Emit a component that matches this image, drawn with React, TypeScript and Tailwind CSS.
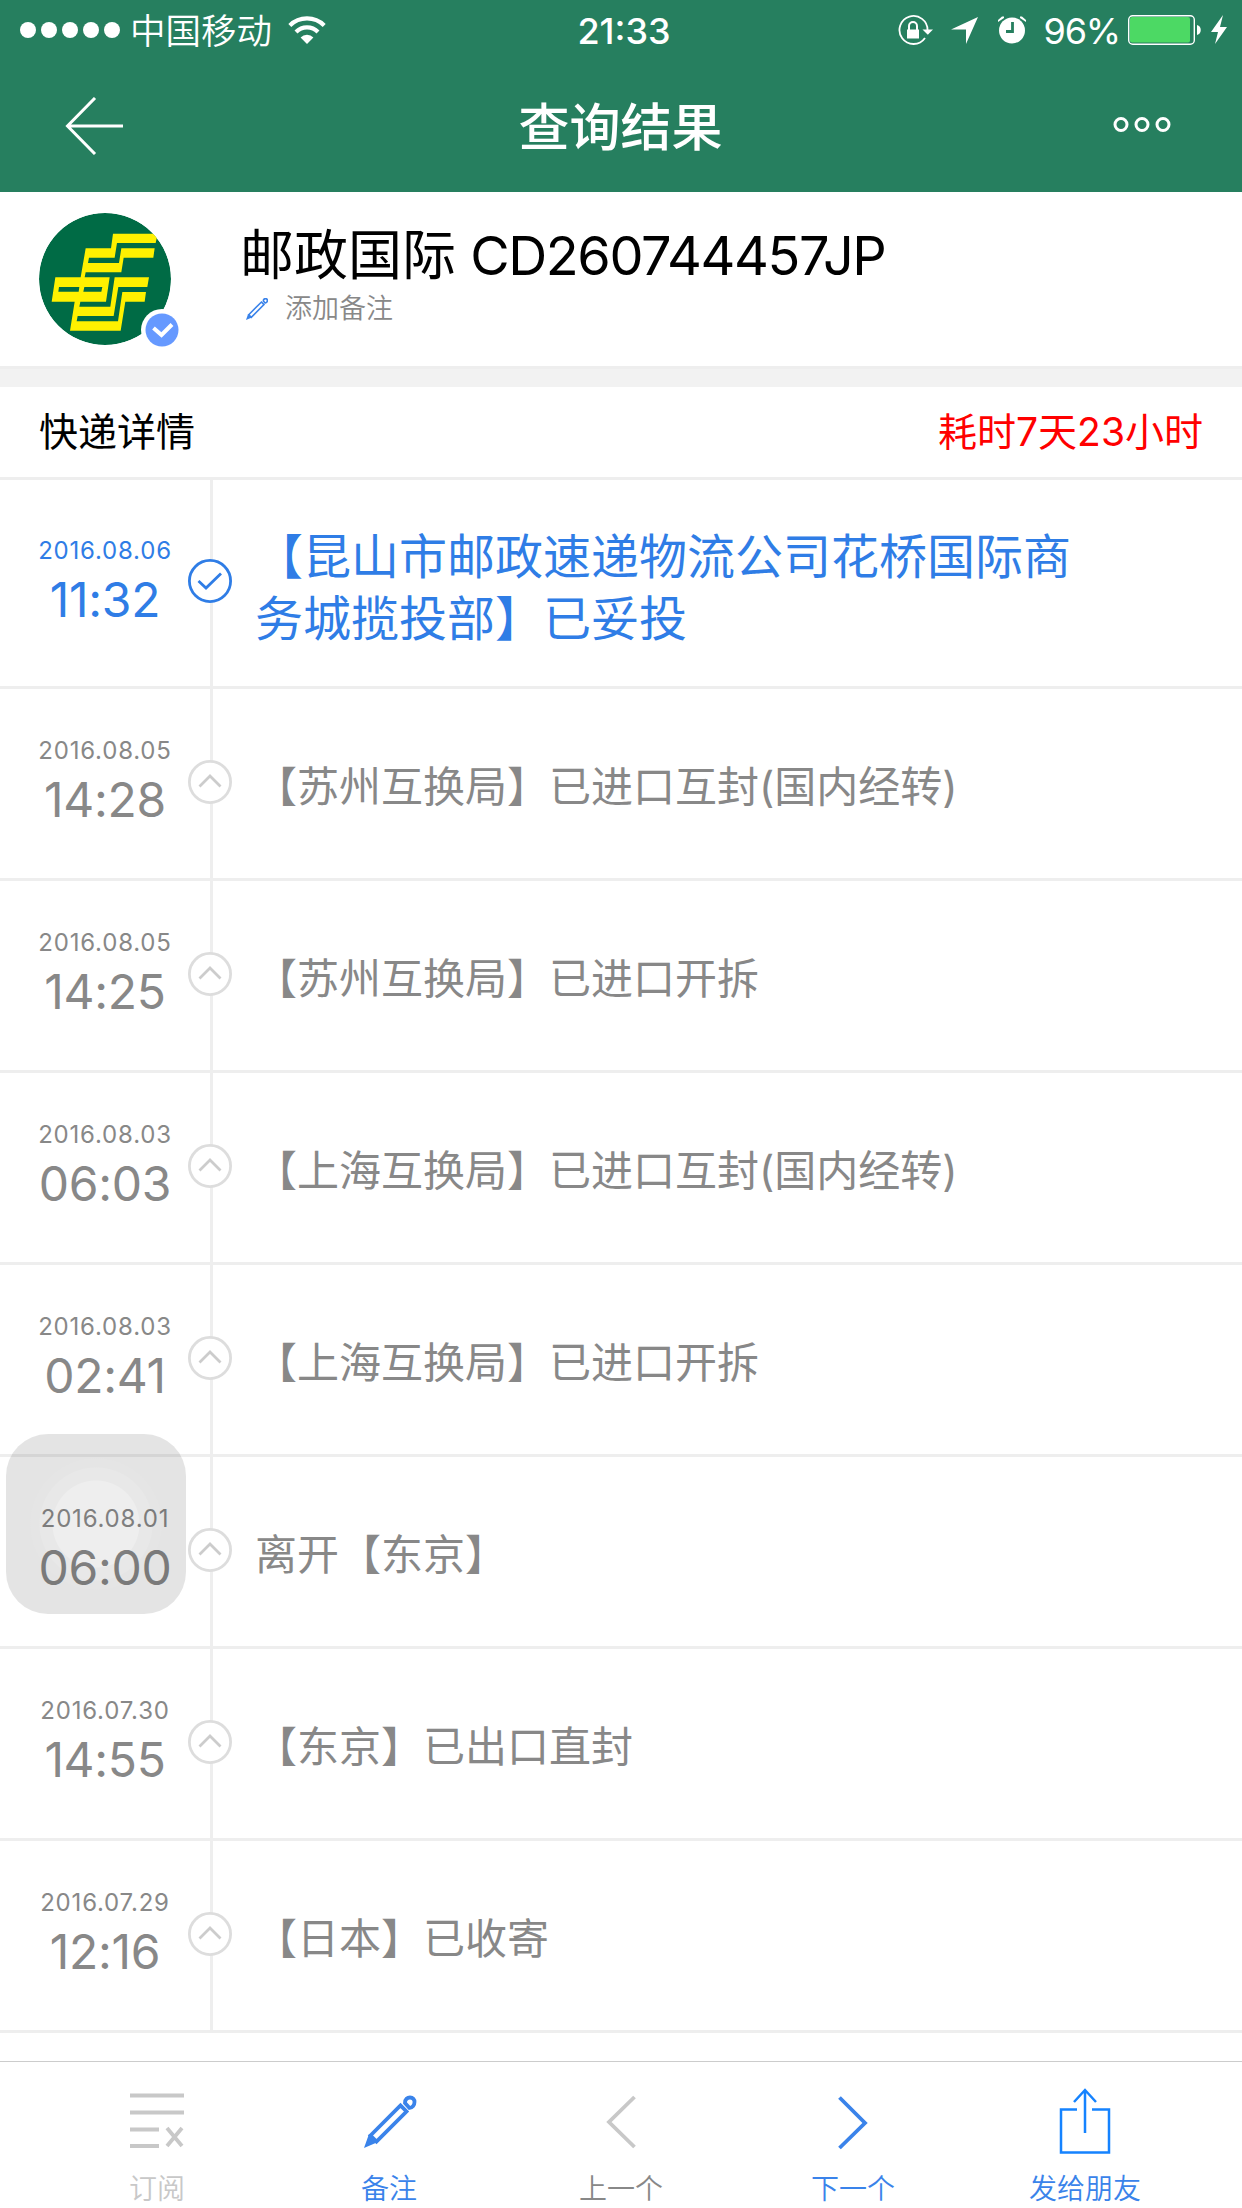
import type { ReactNode } from "react";

interface TrackEvent {
  date: string;
  time: string;
  text: string;
}

const events: TrackEvent[] = [
  { date: "2016.08.06", time: "11:32", text: "【昆山市邮政速递物流公司花桥国际商务城揽投部】已妥投" },
  { date: "2016.08.05", time: "14:28", text: "【苏州互换局】已进口互封(国内经转)" },
  { date: "2016.08.05", time: "14:25", text: "【苏州互换局】已进口开拆" },
  { date: "2016.08.03", time: "06:03", text: "【上海互换局】已进口互封(国内经转)" },
  { date: "2016.08.03", time: "02:41", text: "【上海互换局】已进口开拆" },
  { date: "2016.08.01", time: "06:00", text: "离开【东京】" },
  { date: "2016.07.30", time: "14:55", text: "【东京】已出口直封" },
  { date: "2016.07.29", time: "12:16", text: "【日本】已收寄" },
];

const StatusBar = () => (
  <div className="flex h-[60px] items-center justify-between pl-5 pr-[14px] text-white">
    <div className="flex w-[500px] items-center">
      <svg width="100" height="16" fill="#fff">
        {[8, 29, 50, 71, 92].map((x) => <circle key={x} cx={x} cy="8" r="8" />)}
      </svg>
      <span className="ml-[10px] mt-[4px] whitespace-nowrap text-[35.5px] font-[350] leading-[56px]">中国移动</span>
      <svg className="ml-[16px]" width="38" height="28" viewBox="0 0 38 28" fill="none" stroke="#fff" strokeWidth="4.2">
        <path d="M1.8 9.5a24.5 24.5 0 0 1 34.4 0" />
        <path d="M8 16a15.5 15.5 0 0 1 22 0" />
        <path d="M19 28l-6.4-6.6a9 9 0 0 1 12.8 0z" fill="#fff" stroke="none" />
      </svg>
    </div>
    <span className="mt-[2px] text-[36px] font-medium leading-[58px]">21:33</span>
    <div className="flex w-[500px] items-center justify-end">
      <svg width="35" height="31" viewBox="0 0 35 31" fill="none" stroke="#fff" strokeWidth="1.8">
        <path d="M27 23A14 14 0 1 1 29.5 15.5" />
        <path d="M24.5 14.5H35l-5.2 5.3z" fill="#fff" stroke="none" />
        <path d="M9 14.5h12V23.5H9z" fill="#fff" stroke="none" />
        <path d="M11 15v-4a4 4 0 0 1 8 0v4" strokeWidth="2" />
      </svg>
      <svg className="ml-[18px]" width="27" height="27" viewBox="0 0 27 27" fill="#fff">
        <path d="M0 12.5L27 0 15 27V12.5z" />
      </svg>
      <svg className="ml-5" width="28" height="28" viewBox="0 0 28 28" fill="#fff">
        <circle cx="14" cy="14.5" r="13" />
        <path d="M0 6V4l4-3.5h2V2zM28 6V4l-4-3.5h-2V2z" />
        <path d="M14.5 6v9.5H8" fill="none" stroke="#267f5f" strokeWidth="2.8" />
      </svg>
      <span className="ml-[18px] mt-[3px] text-[36px] leading-[57px] tracking-[-1.2px]">96%</span>
      <svg className="ml-[8px]" width="100" height="30" viewBox="0 0 100 30" fill="none">
        <rect x=".7" y=".7" width="65.6" height="28.6" rx="4" stroke="#fff" strokeWidth="1.4" />
        <rect x="2" y="2" width="60" height="25.5" rx="2" fill="#4cd964" />
        <path d="M69 10c5 1 5 9 0 10z" fill="#fff" />
        <path d="M95 0L83 17h7l-3 12 12-17h-7z" fill="#fff" />
      </svg>
    </div>
  </div>
);

const NavBar = () => (
  <div className="flex h-[132px] items-center justify-between px-[65px] text-white">
    <svg width="58" height="58" viewBox="0 0 58 58" fill="none" stroke="#fff" strokeWidth="3">
      <path d="M58 29H3M30 1L2.5 29 30 57" />
    </svg>
    <h1 className="ml-[5px] mt-[4px] text-[51px] font-medium leading-[60px]">查询结果</h1>
    <svg className="-mt-[2px] mr-[6px]" width="58" height="16" fill="none" stroke="#fff" strokeWidth="3">
      {[8, 29, 50].map((x) => <circle key={x} cx={x} cy="7.5" r="6" />)}
    </svg>
  </div>
);

const PostLogo = () => (
  <svg className="ml-[39px]" width="142" height="134" viewBox="0 0 142 134">
    <defs>
      <clipPath id="disc">
        <circle cx="66" cy="66" r="66" />
      </clipPath>
    </defs>
    <g clipPath="url(#disc)">
      <circle cx="66" cy="66" r="66" fill="#006b45" />
      <path
        transform="translate(6 12) scale(.3333)"
        fill="#fff100"
        fillRule="evenodd"
        d="M204 26L338 26 332 54 216 54 209 98 132 98 129 114 222 114 229 70 329 70 325 98 236 98 229 142 122 142 119 157 194 157 183 230 106 230 103 245 196 245 209 157 312 157 307 186 220 186 206 273 98 273 95 289 219 289 232 201 303 201 299 230 241 230 227 317 75 317 89 230 20 230 31 157 107 157 122 70 198 70zM42 186L103 186 101 200 40 200zM118 186L172 186 169 200 115 200z"
      />
    </g>
    <circle cx="123" cy="117" r="21" fill="#fff" />
    <circle cx="123" cy="117" r="16.5" fill="#69f" />
    <path d="M114.5 115l8 7 10.5-10.5" fill="none" stroke="#fff" strokeWidth="4" />
  </svg>
);

const pencilPaths = (
  <>
    <path d="M6.5 39.5L36.5 9.5l6 6L12.5 45.5z" />
    <path d="M5 38L0 52l14-6z" fill="#3a83ea" stroke="none" />
    <path d="M41 7c0-4 2.5-5.5 5-5.5 3 0 4.5 2 4.5 4.5 0 3-2 5.5-5 6z" />
  </>
);

const EventRow = ({ event, active }: { event: TrackEvent; active: boolean }) => (
  <li className={`flex items-center border-b-[3px] border-[#eee] ${active ? "h-[209px] text-[#2f7de6]" : "h-[192px] text-[#888]"}`}>
    <div className="-mt-[3px] flex w-[210px] flex-col items-center">
      <span className="text-[24px] leading-[36px] tracking-[0.8px]">{event.date}</span>
      <span className="text-[48px] leading-[62px] tracking-[-0.3px]">{event.time}</span>
    </div>
    <div className="-mb-[3px] flex w-[3px] items-center justify-center self-stretch bg-[#eee] pb-[7px]">
      <svg className="-ml-[3px] shrink-0" width="44" height="44" viewBox="0 0 44 44" fill="#fff" stroke={active ? "#2f7de6" : "#ddd"} strokeWidth="2.8">
        <circle cx="22" cy="22" r="20.6" />
        {active ? <path d="M10.5 22l7.5 7L33 14.500" fill="none" /> : <path d="M11.5 26.5L22 16l10.5 10.5" fill="none" stroke="#ccc" />}
      </svg>
    </div>
    <p className={`ml-[42px] w-[830px] ${active ? "mt-[10px] text-[48px] leading-[62px]" : "mt-[7px] text-[42px] leading-[56px]"}`}>{event.text}</p>
  </li>
);

const ToolItem = ({ label, color, children }: { label: string; color: string; children: ReactNode }) => (
  <button className={`flex w-[232px] flex-col items-center ${color}`}>
    <svg className="mt-[21px] shrink-0" width="70" height="80" viewBox="0 0 70 80" fill="none" strokeWidth="3.8">
      {children}
    </svg>
    <span className="mt-px text-[28px] font-[350] leading-[50px]">{label}</span>
  </button>
);

// Floating system button, translucent over the list
const AssistiveTouch = () => (
  <div className="absolute left-[6px] top-[1434px] size-[180px] rounded-[42px] bg-[radial-gradient(circle,rgba(0,0,0,0.067)_43px,rgba(0,0,0,0.09)_44px,rgba(0,0,0,0.09)_56px,rgba(0,0,0,0.1)_57px,rgba(0,0,0,0.1)_65px,rgba(0,0,0,0.106)_66px)]" />
);

export default function App() {
  return (
    <div className="relative flex h-[2208px] w-[1242px] flex-col overflow-hidden bg-white font-['Inter','Noto_Sans_CJK_SC',sans-serif]">
      <header className="bg-[#267f5f]">
        <StatusBar />
        <NavBar />
      </header>
      <section className="flex h-[174px] items-start pt-[21px]">
        <PostLogo />
        <div className="ml-[59px] mt-[8px]">
          <h2 className="text-[54px] leading-[70px] text-black">
            邮政国际 <span className="-ml-px tracking-[-1.4px]">CD260744457JP</span>
          </h2>
          <div className="flex items-center text-[#888]">
            <svg className="ml-[6px]" width="22" height="22" viewBox="0 0 52 52" fill="none" stroke="#3a83ea" strokeWidth="3.8">
              {pencilPaths}
            </svg>
            <span className="ml-[17px] text-[27px] font-[350] leading-[36px]">添加备注</span>
          </div>
        </div>
      </section>
      <div className="h-[21px] border-t-[3px] border-[#eee] bg-[#f2f2f2]" />
      <section className="flex h-[93px] items-center justify-between border-b-[3px] border-[#eee] px-[39px] pt-px text-[39px]">
        <h3 className="text-black">快递详情</h3>
        <span className="text-[#f00]">耗时7天23小时</span>
      </section>
      <ul>
        {events.map((event, i) => <EventRow key={event.time} event={event} active={i === 0} />)}
      </ul>
      <footer className="mt-auto flex h-[147px] border-t border-[#ccc] px-[41px]">
        <ToolItem label="订阅" color="text-[#c8c8c8]">
          <path d="M8 12.5h54M8 29.5h54M8 46.5h29M8 63h29M45 45l15 18M60 45L45 63" stroke="#c8c8c8" />
        </ToolItem>
        <ToolItem label="备注" color="text-[#3a83ea]">
          <g stroke="#3a83ea" transform="translate(10 13)">{pencilPaths}</g>
        </ToolItem>
        <ToolItem label="上一个" color="text-[#888]">
          <path d="M48.5 14L23 39l25.5 25" stroke="#c8c8c8" />
        </ToolItem>
        <ToolItem label="下一个" color="text-[#3a83ea]">
          <path d="M21.5 14.5L47 40 21.5 65" stroke="#3a83ea" />
        </ToolItem>
        <ToolItem label="发给朋友" color="text-[#3a83ea]">
          <path d="M27 26.5H11v43h48v-43H42M35 50V7M24 19L35 7l11 12" stroke="#1583ff" strokeWidth="2.5" />
        </ToolItem>
      </footer>
      <AssistiveTouch />
    </div>
  );
}
